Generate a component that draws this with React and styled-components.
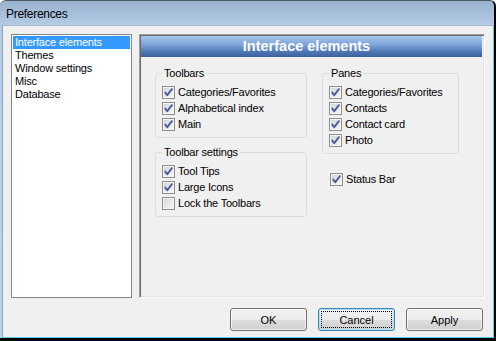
import React from "react";
import styled, { createGlobalStyle, css } from "styled-components";

const GlobalStyle = createGlobalStyle`
  html, body { margin: 0; padding: 0; background: #fff; }
  body { font-family: "Liberation Sans", Arial, sans-serif; }
  * { box-sizing: border-box; }
`;

const Window = styled.div`
  width: 496px;
  height: 341px;
  display: flex;
  flex-direction: column;
  border-top: 1px solid #4d5866;
  border-right: 2px solid #000;
  border-bottom: 3px solid #000;
  border-radius: 6px 6px 0 0;
  overflow: hidden;
  background: linear-gradient(to bottom, #98b2ce 0px, #b6cee7 26px, #bcd4ec 100%);
`;

const TitleBar = styled.div`
  height: 24px;
  padding: 2px 0 0 6px;
  display: flex;
  align-items: center;
  font-size: 12px;
  letter-spacing: -0.3px;
  color: #000;
`;

const Frame = styled.div`
  flex: 1;
  display: flex;
  min-height: 0;
  padding-left: 2px;
`;

const ClientArea = styled.div`
  flex: 1;
  display: flex;
  flex-direction: column;
  background: #f0f0f0;
  border-left: 1px solid #8ea3ba;
  border-top: 1px solid #a3b8cf;
  border-right: 1px solid #52cbe9;
  border-bottom: 1px solid #52cbe9;
  padding: 8px 8px 6px 8px;
`;

const MainRow = styled.div`
  display: flex;
  gap: 7px;
  height: 264px;
`;

const ListBox = styled.ul`
  width: 121px;
  margin: 0;
  padding: 1px;
  list-style: none;
  background: #fff;
  border: 1px solid #828790;
`;

const ListItem = styled.li`
  height: 13px;
  line-height: 13px;
  padding-left: 2px;
  font-size: 11px;
  letter-spacing: -0.2px;
  white-space: nowrap;
  color: #000;
  ${(p) =>
    p.$selected &&
    css`
      background: #3399ff;
      color: #fff;
    `}
`;

const Panel = styled.div`
  flex: 1;
  display: flex;
  flex-direction: column;
  padding: 1px;
  border: 1px solid;
  border-color: #a0a0a0 #fff #fff #a0a0a0;
  box-shadow: inset 1px 1px 0 #696969, inset -1px -1px 0 #e3e3e3;
`;

const Header = styled.div`
  height: 21px;
  margin-right: 1px;
  padding-right: 10px;
  line-height: 21px;
  text-align: center;
  color: #fff;
  font-weight: bold;
  font-size: 14.5px;
  background: linear-gradient(to bottom, #a8c7ee 0%, #7aa0d6 45%, #4d76b3 75%, #3a63a0 100%);
`;

const PanelBody = styled.div`
  display: flex;
  gap: 15px;
  padding: 9px 0 0 14px;
`;

const Column = styled.div`
  display: flex;
  flex-direction: column;
  width: ${(p) => p.$width}px;
`;

const GroupBox = styled.fieldset`
  margin: 0;
  margin-top: ${(p) => p.$top || 0}px;
  padding: 4px 6px 5px 6px;
  border: 1px solid #d5dfe5;
  border-radius: 3px;
  min-width: 0;
`;

const Legend = styled.legend`
  padding: 0 2px;
  font-size: 11px;
  line-height: 14px;
  letter-spacing: -0.2px;
  color: #000;
`;

const CheckRow = styled.label`
  display: flex;
  align-items: center;
  gap: 3px;
  height: 16px;
  font-size: 11px;
  letter-spacing: -0.2px;
  white-space: nowrap;
  color: #000;
  margin-top: ${(p) => p.$top || 0}px;
  margin-left: ${(p) => p.$left || 0}px;
`;

const Box = styled.span`
  width: 13px;
  height: 13px;
  flex: none;
  display: flex;
  align-items: center;
  justify-content: center;
  border: 1px solid #8e8f8f;
  background: linear-gradient(135deg, #cfd2d6 0%, #e9eaeb 55%, #f8f8f8 100%);
  box-shadow: inset 0 0 0 1px #f4f4f4;
`;

const ButtonRow = styled.div`
  display: flex;
  justify-content: flex-end;
  gap: 11px;
  margin-top: 10px;
  padding-right: 2px;
`;

const Button = styled.button`
  position: relative;
  width: 77px;
  height: 23px;
  padding: 0;
  font-family: "Liberation Sans", Arial, sans-serif;
  font-size: 11px;
  color: #000;
  border: 1px solid #707070;
  border-radius: 3px;
  background: linear-gradient(to bottom, #f2f2f2 0%, #ebebeb 50%, #dddddd 51%, #cfcfcf 100%);
  box-shadow: inset 0 0 0 1px rgba(255, 255, 255, 0.7);
  ${(p) =>
    p.$focused &&
    css`
      border-color: #3c7fb1;
      box-shadow: inset 0 0 0 1px #a8e4fb;
      &::after {
        content: "";
        position: absolute;
        inset: 2px;
        border: 1px dotted #000;
      }
    `}
`;

function CheckBox({ checked, label, top, left }) {
  return (
    <CheckRow $top={top} $left={left}>
      <Box>
        {checked && (
          <svg width="11" height="11" viewBox="0 0 11 11">
            <path
              d="M2.2 5.6 L4.3 8.2 L8.9 2.2"
              fill="none"
              stroke="#4a5c9a"
              strokeWidth="1.9"
              strokeLinecap="round"
              strokeLinejoin="round"
            />
          </svg>
        )}
      </Box>
      {label}
    </CheckRow>
  );
}

export default function App() {
  return (
    <>
      <GlobalStyle />
      <Window>
        <TitleBar>Preferences</TitleBar>
        <Frame>
          <ClientArea>
            <MainRow>
              <ListBox>
                <ListItem $selected>Interface elements</ListItem>
                <ListItem>Themes</ListItem>
                <ListItem>Window settings</ListItem>
                <ListItem>Misc</ListItem>
                <ListItem>Database</ListItem>
              </ListBox>
              <Panel>
                <Header>Interface elements</Header>
                <PanelBody>
                  <Column $width={152}>
                    <GroupBox>
                      <Legend>Toolbars</Legend>
                      <CheckBox checked label="Categories/Favorites" />
                      <CheckBox checked label="Alphabetical index" />
                      <CheckBox checked label="Main" />
                    </GroupBox>
                    <GroupBox $top={7}>
                      <Legend>Toolbar settings</Legend>
                      <CheckBox checked label="Tool Tips" />
                      <CheckBox checked label="Large Icons" />
                      <CheckBox label="Lock the Toolbars" />
                    </GroupBox>
                  </Column>
                  <Column $width={137}>
                    <GroupBox>
                      <Legend>Panes</Legend>
                      <CheckBox checked label="Categories/Favorites" />
                      <CheckBox checked label="Contacts" />
                      <CheckBox checked label="Contact card" />
                      <CheckBox checked label="Photo" />
                    </GroupBox>
                    <CheckBox checked label="Status Bar" top={17} left={8} />
                  </Column>
                </PanelBody>
              </Panel>
            </MainRow>
            <ButtonRow>
              <Button>OK</Button>
              <Button $focused>Cancel</Button>
              <Button>Apply</Button>
            </ButtonRow>
          </ClientArea>
        </Frame>
      </Window>
    </>
  );
}
